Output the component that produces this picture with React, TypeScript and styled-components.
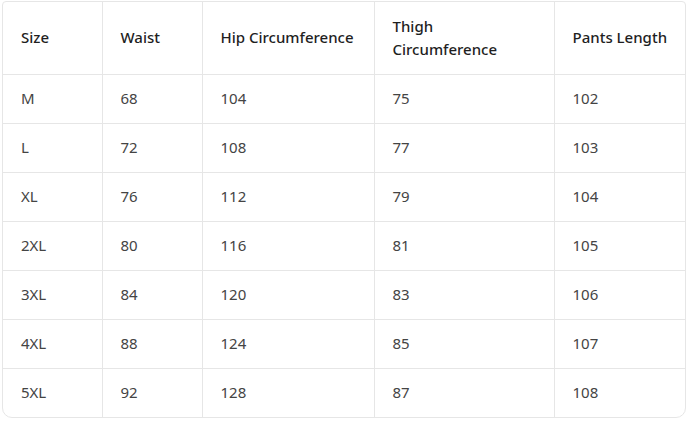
import styled, { createGlobalStyle } from 'styled-components';

const GlobalStyle = createGlobalStyle`
  html, body {
    margin: 0;
    padding: 0;
    background: #ffffff;
  }
  body {
    font-family: 'Noto Sans', 'Open Sans', sans-serif;
  }
`;

const headers = ['Size', 'Waist', 'Hip Circumference', 'Thigh Circumference', 'Pants Length'];

const rows = [
  ['M', '68', '104', '75', '102'],
  ['L', '72', '108', '77', '103'],
  ['XL', '76', '112', '79', '104'],
  ['2XL', '80', '116', '81', '105'],
  ['3XL', '84', '120', '83', '106'],
  ['4XL', '88', '124', '85', '107'],
  ['5XL', '92', '128', '87', '108'],
];

const widths = [99, 100, 172, 180, 131];

export default function App() {
  return (
    <>
      <GlobalStyle />
      <Frame>
        <Table>
          <colgroup>
            {widths.map((w, i) => (
              <col key={i} style={{ width: w }} />
            ))}
          </colgroup>
          <thead>
            <tr>
              {headers.map((h) => (
                <HeadCell key={h}>{h === 'Thigh Circumference' ? <>Thigh<br />Circumference</> : h}</HeadCell>
              ))}
            </tr>
          </thead>
          <tbody>
            {rows.map((r) => (
              <tr key={r[0]}>
                {r.map((v, i) => (
                  <Cell key={i}>{v}</Cell>
                ))}
              </tr>
            ))}
          </tbody>
        </Table>
      </Frame>
    </>
  );
}

const Frame = styled.div`
  margin: 1px 0 0 2px;
  width: 684px;
  box-sizing: border-box;
  border: 1px solid #e6e6e6;
  border-radius: 4px 4px 10px 10px;
  overflow: hidden;
  background: #ffffff;
`;

const Table = styled.table`
  width: 100%;
  table-layout: fixed;
  border-collapse: collapse;
  font-size: 15px;
  line-height: 23px;
`;

const BaseCell = styled.td`
  text-align: left;
  vertical-align: middle;
  padding: 12px 8px 12px 18px;
  border-left: 1px solid #e6e6e6;
  border-top: 1px solid #e6e6e6;
  white-space: nowrap;

  &:first-child {
    border-left: none;
  }
`;

const HeadCell = styled(BaseCell).attrs({ as: 'th' })`
  border-top: none;
  height: 72px;
  box-sizing: border-box;
  font-weight: 500;
  color: #1f1f1f;
`;

const Cell = styled(BaseCell)`
  height: 49px;
  box-sizing: border-box;
  color: #444444;
`;
